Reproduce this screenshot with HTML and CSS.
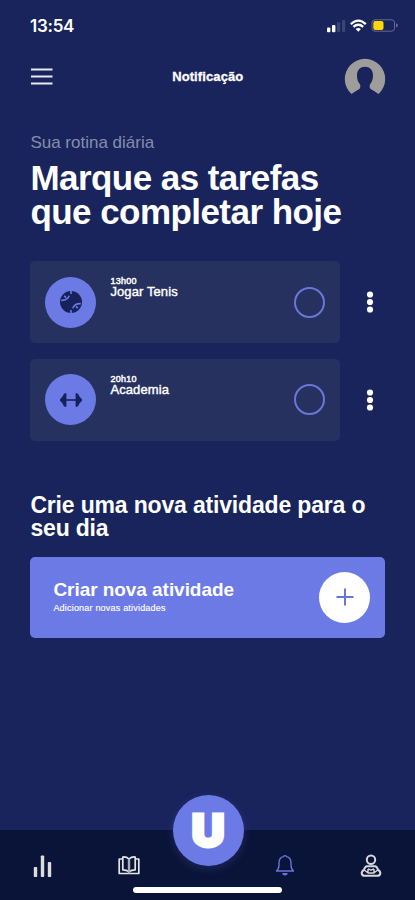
FILE: index.html
```html
<!DOCTYPE html>
<html lang="pt-BR">
<head>
<meta charset="utf-8">
<meta name="viewport" content="width=device-width, initial-scale=1">
<title>Notificação</title>
<link rel="stylesheet" href="styles.css">
</head>
<body>
<div class="screen">
  <div class="status">
    <span class="clock">13:54</span>
    <svg class="indicators" width="74" height="18" viewBox="0 0 74 18">
      <g fill="#fff"><rect x="1" y="10.5" width="3.4" height="4.8" rx="1"/><rect x="6" y="8" width="3.4" height="7.3" rx="1"/></g>
      <g fill="#3b4475"><rect x="11" y="5.3" width="3.2" height="9.7" rx="1"/><rect x="16" y="3" width="3.2" height="12" rx="1"/></g>
      <g fill="none" stroke="#fff" stroke-width="2.3"><path d="M24.8 7.1Q32.3.2 39.8 7.1"/><path d="M27.4 9.9Q32.3 5.6 37.2 9.9"/></g>
      <path d="M29.7 11.9Q32.3 10 34.9 11.9L32.3 14.8z" fill="#fff"/>
      <rect x="46" y="2.8" width="22.5" height="11.4" rx="3" fill="none" stroke="#666b88"/>
      <rect x="47.3" y="4.1" width="10.2" height="8.8" rx="2" fill="#ffd60a"/>
      <path d="M70 6.2Q74 8.3 70 10.6z" fill="#666b88"/>
    </svg>
  </div>

  <header class="header">
    <svg width="22" height="18" viewBox="0 0 22 18"><path d="M0 1.6h21.5M0 8.6h21.5M0 15.6h21.5" stroke="#e9eaf3" stroke-width="2"/></svg>
    <h1 class="page-name">Notificação</h1>
    <svg class="avatar" width="42" height="34" viewBox="0 0 42 34"><path d="M7.5 33A20.2 20.2 0 1 1 34.5 33Q30.5 30.1 26.6 28C25.3 26.5 25.4 24.5 26.4 22.8C28.3 20.5 29 17.5 29 14.2C29 9 25.7 5.7 21 5.7S13 9 13 14.2C13 17.5 13.7 20.5 15.6 22.8C16.6 24.5 16.7 26.5 15.4 28Q11.5 30.1 7.5 33z" fill="#9e9d9c"/></svg>
  </header>

  <main>
    <p class="eyebrow">Sua rotina diária</p>
    <h2 class="title">Marque as tarefas<br>que completar hoje</h2>

    <ul class="tasks">
      <li class="task">
        <div class="card">
          <div class="badge">
            <svg width="24" height="24" viewBox="0 0 24 24"><circle cx="12" cy="12" r="11" fill="#18225a"/><path d="M12 0v4M12 20v4M2.2 10.4C6 10.6 9 9 10.2 5.8M21.8 13.6C18 13.4 15 15 13.8 18.2M7 7.6L5.2 5.8M17 16.4l1.8 1.8" fill="none" stroke="#6c7ae6" stroke-width="1.6"/></svg>
          </div>
          <div class="details"><span class="time">13h00</span><span class="name">Jogar Tenis</span></div>
          <span class="check"></span>
        </div>
        <svg class="more" width="8" height="24" viewBox="0 0 8 24"><g fill="#fff"><circle cx="4" cy="4.5" r="3.1"/><circle cx="4" cy="12" r="3.1"/><circle cx="4" cy="19.5" r="3.1"/></g></svg>
      </li>
      <li class="task">
        <div class="card">
          <div class="badge">
            <svg width="24" height="24" viewBox="0 0 24 24"><g fill="#18225a"><path d="M7 11.2h10v1.6H7z"/><path d="M6.3 5Q7.4 5 7.4 6v12q0 1-1.1 1Q4.7 18.6 3.2 15L1 12.8v-1.6L3.2 9Q4.7 5.4 6.3 5zM17.7 5Q16.6 5 16.6 6v12q0 1 1.1 1Q19.3 18.6 20.8 15L23 12.8v-1.6L20.8 9Q19.3 5.4 17.7 5z"/></g></svg>
          </div>
          <div class="details"><span class="time">20h10</span><span class="name">Academia</span></div>
          <span class="check"></span>
        </div>
        <svg class="more" width="8" height="24" viewBox="0 0 8 24"><g fill="#fff"><circle cx="4" cy="4.5" r="3.1"/><circle cx="4" cy="12" r="3.1"/><circle cx="4" cy="19.5" r="3.1"/></g></svg>
      </li>
    </ul>

    <h3 class="subtitle">Crie uma nova atividade para o<br>seu dia</h3>
    <div class="create">
      <div><div class="create-title">Criar nova atividade</div><div class="create-note">Adicionar novas atividades</div></div>
      <div class="plus"><svg width="18" height="18" viewBox="0 0 18 18"><path d="M9 .5v17M.5 9h17" stroke="#6875df" stroke-width="2"/></svg></div>
    </div>
  </main>

  <nav class="nav">
    <svg class="chart" width="20" height="24" viewBox="0 0 20 24"><g fill="#dddde0"><rect x="1.8" y="13" width="3.4" height="10" rx=".8"/><rect x="8.8" y="1.5" width="3.4" height="21.5" rx=".8"/><rect x="15.8" y="8" width="3.4" height="15" rx=".8"/></g></svg>
    <svg class="book" width="24" height="22" viewBox="0 0 24 22"><g fill="none" stroke="#e5e5e5" stroke-width="1.7" stroke-linejoin="round"><path d="M12 4Q9.5 1.6 5.8 2v12.8Q9.5 14.8 12 16.6Q14.5 14.8 18.2 14.8V2Q14.5 1.6 12 4"/><path d="M5.5 4H2.2v14.5h19.6V4h-3.3"/><path d="M12 4v14.5" stroke="#aaaeb8" stroke-width="2.4"/></g></svg>
    <div class="logo">U</div>
    <svg class="bell" width="20" height="24" viewBox="0 0 20 24"><g fill="none" stroke="#6b72dc" stroke-width="1.4" stroke-linejoin="round"><path d="M1.5 17Q4 15 4 11V8.5Q4.3 3.4 8.4 2.6Q8.5 1.6 10 1.6T11.6 2.6Q15.7 3.4 16 8.5V11Q16 15 18.5 17z"/><path d="M8 19.8Q10 22 12 19.8z"/></g></svg>
    <svg class="person" width="22" height="24" viewBox="0 0 22 24"><g fill="none" stroke="#d9d9dc" stroke-width="2" stroke-linejoin="round"><circle cx="11" cy="5.8" r="4.2"/><path d="M7 12.3h8Q17 12.5 18 15.8Q20.5 17 20.3 19.5Q20 21.7 17.5 21.8H4.5Q2 21.7 1.7 19.5Q1.5 17 4 15.8Q5 12.5 7 12.3z"/><path d="M4.2 16l3.3 2.5M17.8 16l-3.3 2.5M8 14.8l3 1.4 3-1.4M8 15v4h6v-4" stroke-width="1.4"/></g></svg>
    <span class="home-bar"></span>
  </nav>
</div>
</body>
</html>
```
FILE: styles.css
```css
* { box-sizing: border-box; }
body { margin: 0; background: #19245c; }
h1, h2, h3, p, ul { margin: 0; padding: 0; }
svg { display: block; flex: none; }
.screen { width: 415px; height: 900px; display: flex; flex-direction: column; background: #19245c; color: #fff; font-family: "Liberation Sans", Arial, sans-serif; overflow: hidden; }
.status { height: 52px; padding: 0 15px 0 30px; display: flex; align-items: center; justify-content: space-between; }
.clock { font: 600 17px "Inter", sans-serif; letter-spacing: -.25px; }
.indicators { margin-bottom: 1px; }
.header { height: 50px; padding: 0 29px 0 30.5px; display: grid; grid-template-columns: 42px 1fr 42px; align-items: center; }
.page-name { font-size: 13px; line-height: 16px; text-align: center; letter-spacing: .1px; text-indent: -1px; -webkit-text-stroke: .3px #fff; }
.avatar { margin-top: 2px; overflow: visible; }
main { flex: 1; padding: 31px 30px 0 30.4px; }
.eyebrow { font-size: 17px; line-height: 20px; color: #868dac; }
.title { font-size: 35px; line-height: 34px; margin-top: 8px; letter-spacing: -.55px; white-space: nowrap; }
.tasks { list-style: none; margin-top: 32px; display: grid; gap: 15.5px; }
.task { display: flex; align-items: center; }
.card { width: 310px; height: 82px; padding: 0 15px; border-radius: 5px; background: #263160; display: flex; align-items: center; }
.badge { width: 51px; height: 51px; border-radius: 50%; background: #6c7ae6; display: grid; place-items: center; }
.details { flex: 1; align-self: stretch; margin-left: 14px; padding-top: 15px; }
.time, .name { display: block; white-space: nowrap; }
.time { font-size: 9px; line-height: 10px; letter-spacing: .3px; -webkit-text-stroke: .45px #fff; }
.name { font-size: 13px; line-height: 12px; letter-spacing: .1px; -webkit-text-stroke: .4px #fff; }
.check { width: 31px; height: 31px; border: 2px solid #6b76d9; border-radius: 50%; }
.more { margin-left: 25.6px; }
.subtitle { font-size: 23px; line-height: 23px; margin-top: 53.6px; letter-spacing: -.17px; white-space: nowrap; }
.create { height: 81px; margin-top: 16.5px; padding: 0 15px 0 23px; border-radius: 5px; background: #6c7ae6; display: flex; align-items: center; justify-content: space-between; }
.create-title { font-size: 19px; line-height: 22px; font-weight: 700; letter-spacing: -.05px; }
.create-note { font-size: 9px; line-height: 12px; margin: 1px 0 2px; letter-spacing: .2px; -webkit-text-stroke: .15px #fff; }
.plus { width: 51px; height: 51px; border-radius: 50%; background: #fff; display: grid; place-items: center; }
.nav { position: relative; height: 70px; padding: 0 33px 0 32px; background: #0a1439; display: flex; align-items: center; justify-content: space-between; }
.nav > svg { margin-top: 1px; }
.logo { position: absolute; left: 172.5px; top: -35px; width: 71px; height: 71px; border-radius: 50%; background: #6c7ae6; box-shadow: 0 3px 10px #6c7ae633; font: 900 46px/71px "Inter", sans-serif; text-align: center; -webkit-text-stroke: 3px #fff; }
.nav > .book { margin-right: 70px; }
.home-bar { position: absolute; left: 133px; bottom: 7px; width: 149px; height: 6px; border-radius: 3px; background: #fff; }
```
